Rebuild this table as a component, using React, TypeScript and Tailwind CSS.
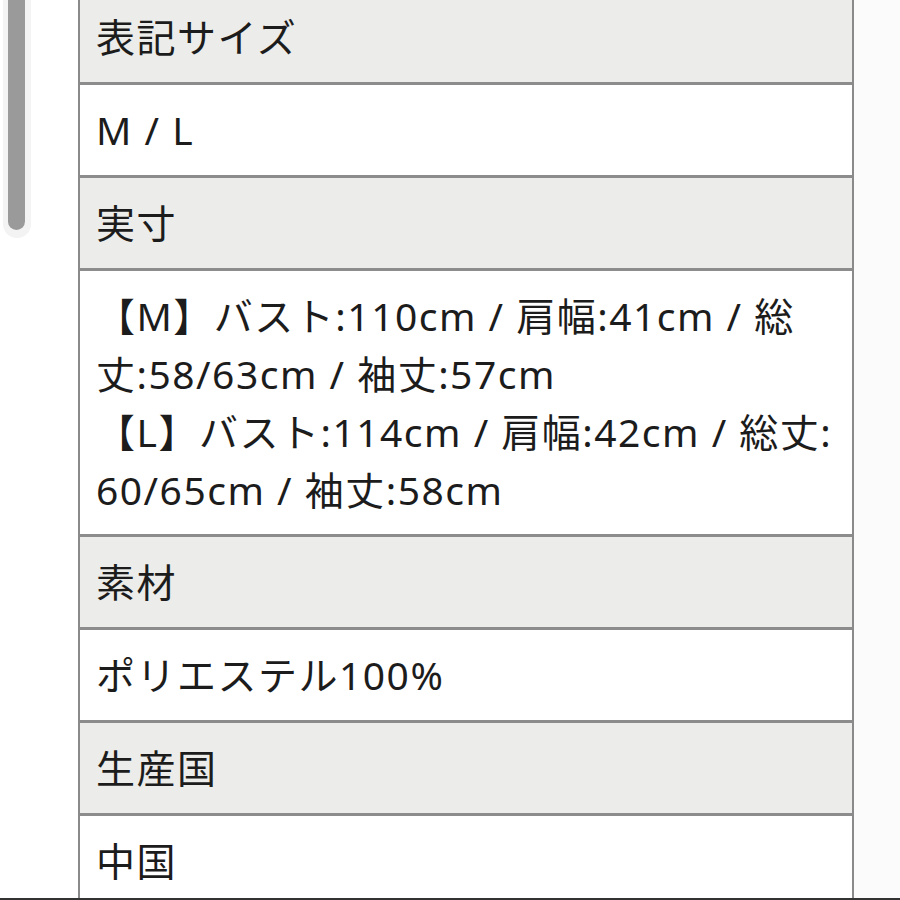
const rows: { label: string; gray: boolean; lines: string[] }[] = [
  { label: "head1", gray: true, lines: ["表記サイズ"] },
  { label: "val1", gray: false, lines: ["M / L"] },
  { label: "head2", gray: true, lines: ["実寸"] },
  {
    label: "val2",
    gray: false,
    lines: [
      "【M】バスト:110cm / 肩幅:41cm / 総",
      "丈:58/63cm / 袖丈:57cm",
      "【L】バスト:114cm / 肩幅:42cm / 総丈:",
      "60/65cm / 袖丈:58cm",
    ],
  },
  { label: "head3", gray: true, lines: ["素材"] },
  { label: "val3", gray: false, lines: ["ポリエステル100%"] },
  { label: "head4", gray: true, lines: ["生産国"] },
  { label: "val4", gray: false, lines: ["中国"] },
]

export default function App() {
  return (
    <div
      className="relative w-[900px] h-[900px] overflow-hidden bg-white text-[#1c1c1c]"
      style={{ fontFamily: '"Noto Sans", "Noto Sans CJK JP", sans-serif' }}
    >
      {/* overlay scrollbar */}
      <div className="absolute left-[3px] top-0 w-[28px] h-[238px] bg-[#f3f3f3] rounded-b-full" />
      <div className="absolute left-[8px] top-0 w-[17px] h-[230px] bg-[#9a9a9a] rounded-b-full" />

      <div className="flex h-full">
        <div className="w-[78px] shrink-0" />
        <div className="w-[776px] shrink-0 -mt-[8px] border-x-2 border-[#8a8a8a]">
          {rows.map((row) => (
            <div
              key={row.label}
              className={
                "flex flex-col justify-center px-[16px] border-b-[3px] border-[#8c8c8c] text-[39px] leading-[58px] tracking-[1.5px] " +
                (row.gray ? "bg-[#ececea]" : "bg-white") +
                (row.lines.length > 1 ? " h-[266px]" : " h-[93px]")
              }
            >
              {row.lines.map((line, i) => (
                <span key={i} className="block whitespace-nowrap">
                  {line}
                </span>
              ))}
            </div>
          ))}
        </div>
        <div className="flex-1 bg-[#fbfbfb]" />
      </div>
      <div className="absolute left-0 bottom-0 w-full h-[2px] bg-[#333333]" />
    </div>
  )
}
